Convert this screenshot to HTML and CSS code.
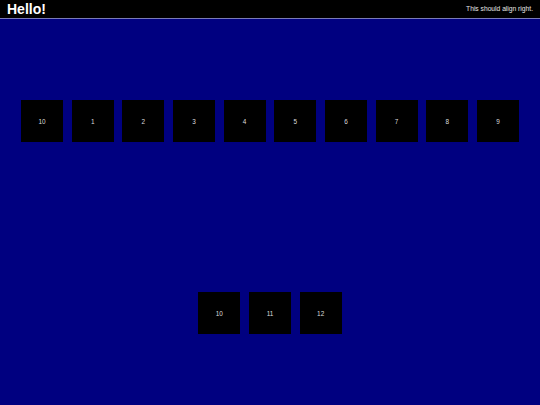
FILE: index.html
```html
<!DOCTYPE html>
<html>
<head>
<meta charset="utf-8">
<link rel="stylesheet" href="styles.css">
</head>
<body>
<header class="topbar">
  <h1 class="title">Hello!</h1>
  <span class="note">This should align right.</span>
</header>
<main class="stage">
  <div class="row row-full">
    <div class="tile">10</div>
    <div class="tile">1</div>
    <div class="tile">2</div>
    <div class="tile">3</div>
    <div class="tile">4</div>
    <div class="tile">5</div>
    <div class="tile">6</div>
    <div class="tile">7</div>
    <div class="tile">8</div>
    <div class="tile">9</div>
  </div>
  <div class="row row-center">
    <div class="tile">10</div>
    <div class="tile">11</div>
    <div class="tile">12</div>
  </div>
</main>
</body>
</html>
```

FILE: styles.css
```css
html, body {
  margin: 0;
  padding: 0;
  height: 100%;
  background: #000080;
  font-family: "Liberation Sans", Arial, sans-serif;
  overflow: hidden;
}

.topbar {
  height: 18px;
  background: #000;
  border-bottom: 1px solid #7a7ab8;
  display: flex;
  align-items: center;
  justify-content: space-between;
  padding: 0 7px;
}

.title {
  margin: 0;
  font-size: 14px;
  font-weight: bold;
  color: #fff;
  line-height: 18px;
}

.note {
  font-size: 6.7px;
  color: #e8e8e8;
  line-height: 18px;
}

.stage {
  padding-top: 81px;
  display: flex;
  flex-direction: column;
  gap: 150px;
}

.row {
  display: flex;
  gap: 8.67px;
}

.row-full {
  padding-left: 21px;
}

.row-center {
  justify-content: center;
}

.tile {
  width: 42px;
  height: 42px;
  flex: none;
  background: #000;
  color: #dcdcdc;
  font-size: 6.4px;
  display: flex;
  align-items: center;
  justify-content: center;
}
```
